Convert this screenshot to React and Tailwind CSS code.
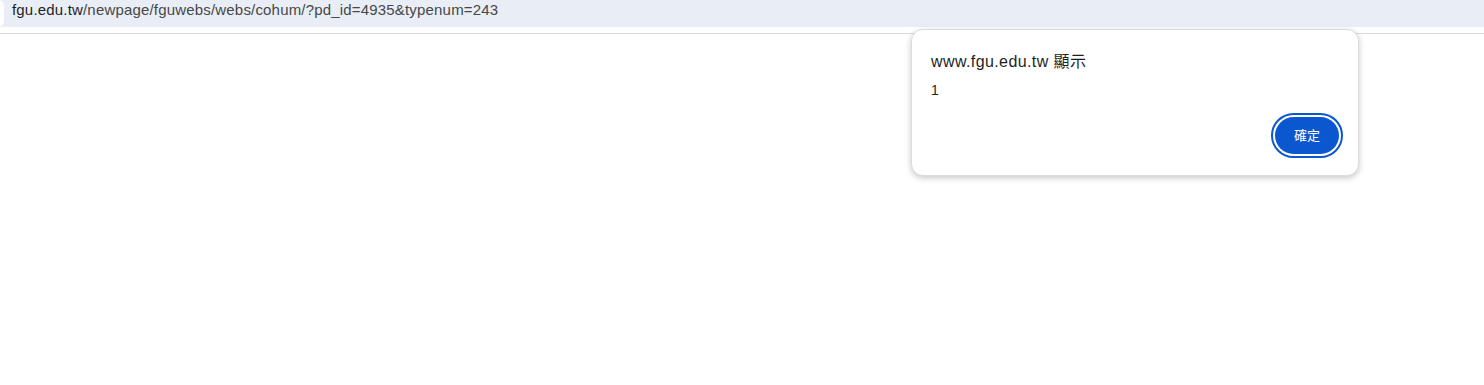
export default function App() {
  return (
    <div
      className="relative w-[1484px] h-[385px] bg-white overflow-hidden"
      style={{ fontFamily: '"Liberation Sans", "Noto Sans CJK TC", sans-serif' }}
    >
      <div className="h-[27px] bg-[#e9eef6] flex items-start relative">
        <div className="absolute left-[-8px] top-0 w-[12px] h-[27px] rounded-full bg-white" />
        <div className="pl-[12px] pt-[1px] text-[15px] leading-[18px] tracking-[0.18px] whitespace-nowrap">
          <span className="text-[#1f1f1f]">fgu.edu.tw</span>
          <span className="text-[#474747]">/newpage/fguwebs/webs/cohum/?pd_id=4935&amp;typenum=243</span>
        </div>
      </div>
      <div className="h-[6px]" />
      <div className="h-px bg-[#d9d9d9]" />

      <div className="absolute left-[911px] top-[29px] w-[448px] h-[147px] bg-white rounded-[12px] border border-[#dadce0] shadow-[0_2px_6px_rgba(0,0,0,0.22)] flex flex-col pl-[19px] pr-[19px]">
        <div className="pt-[20px] text-[16px] leading-[24px] tracking-[0.4px] text-[#1f1f1f] whitespace-nowrap">
          www.fgu.edu.tw 顯示
        </div>
        <div className="mt-[6px] text-[14px] leading-[20px] text-[#1f1f1f]">1</div>
        <div className="mt-[17px] flex justify-end">
          <button className="w-[64px] h-[37px] rounded-full bg-[#0b57d0] text-white text-[13px] outline-2 outline-[#0b57d0] outline-offset-2">
            確定
          </button>
        </div>
      </div>
    </div>
  );
}
